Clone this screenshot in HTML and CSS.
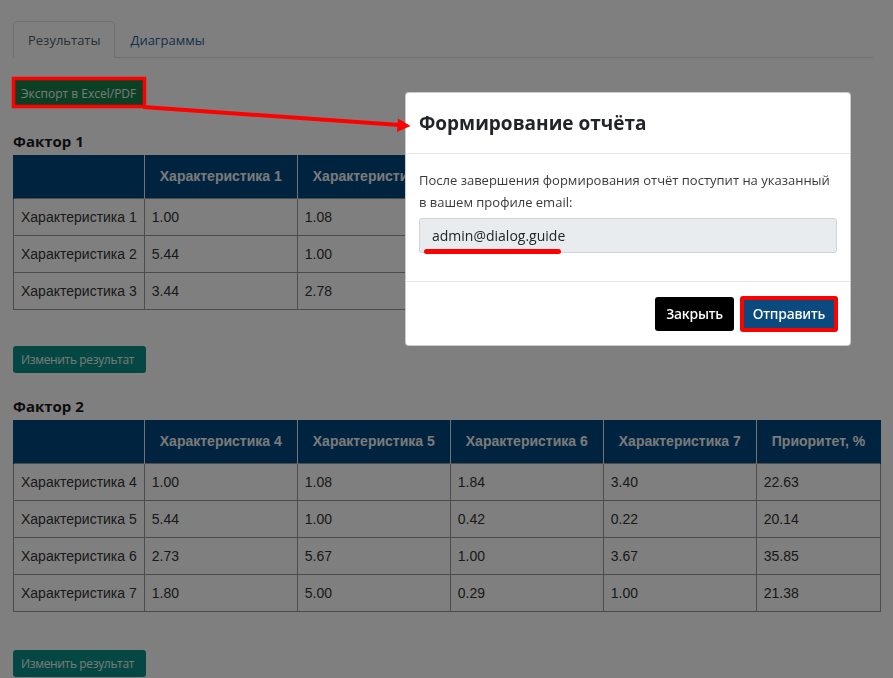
FILE: index.html
```html
<!DOCTYPE html>
<html lang="ru">
<head>
<meta charset="utf-8">
<title>Результаты</title>
<link rel="stylesheet" href="styles.css">
</head>
<body>
<div class="page">
  <ul class="tabs">
    <li class="tab tab-active">Результаты</li>
    <li class="tab">Диаграммы</li>
  </ul>

  <button class="btn btn-export">Экспорт в Excel/PDF</button>

  <h3 class="factor-title">Фактор 1</h3>
  <table class="matrix">
    <thead>
      <tr><th></th><th>Характеристика 1</th><th>Характеристика 2</th><th>Характеристика 3</th><th>Приоритет, %</th></tr>
    </thead>
    <tbody>
      <tr><td>Характеристика 1</td><td>1.00</td><td>1.08</td><td>1.84</td><td>33.63</td></tr>
      <tr><td>Характеристика 2</td><td>5.44</td><td>1.00</td><td>0.42</td><td>30.14</td></tr>
      <tr><td>Характеристика 3</td><td>3.44</td><td>2.78</td><td>1.00</td><td>36.23</td></tr>
    </tbody>
  </table>
  <button class="btn btn-edit">Изменить результат</button>

  <h3 class="factor-title">Фактор 2</h3>
  <table class="matrix">
    <thead>
      <tr><th></th><th>Характеристика 4</th><th>Характеристика 5</th><th>Характеристика 6</th><th>Характеристика 7</th><th>Приоритет, %</th></tr>
    </thead>
    <tbody>
      <tr><td>Характеристика 4</td><td>1.00</td><td>1.08</td><td>1.84</td><td>3.40</td><td>22.63</td></tr>
      <tr><td>Характеристика 5</td><td>5.44</td><td>1.00</td><td>0.42</td><td>0.22</td><td>20.14</td></tr>
      <tr><td>Характеристика 6</td><td>2.73</td><td>5.67</td><td>1.00</td><td>3.67</td><td>35.85</td></tr>
      <tr><td>Характеристика 7</td><td>1.80</td><td>5.00</td><td>0.29</td><td>1.00</td><td>21.38</td></tr>
    </tbody>
  </table>
  <button class="btn btn-edit btn-edit-last">Изменить результат</button>
</div>

<div class="backdrop"></div>

<div class="modal">
  <div class="modal-header">
    <h2 class="modal-title">Формирование отчёта</h2>
  </div>
  <div class="modal-body">
    <p class="modal-text">После завершения формирования отчёт поступит на указанный в вашем профиле email:</p>
    <div class="email-field">admin@dialog.guide</div>
  </div>
  <div class="modal-footer">
    <button class="mbtn mbtn-close">Закрыть</button>
    <button class="mbtn mbtn-send">Отправить</button>
  </div>
</div>

<svg class="annotations" width="893" height="678" viewBox="0 0 893 678">
  <rect x="13.5" y="78.5" width="131" height="28" fill="none" stroke="#ff0000" stroke-width="3.5"/>
  <line x1="143" y1="107" x2="400" y2="125" stroke="#ff0000" stroke-width="4"/>
  <polygon points="398,118.5 410.5,126 397,132" fill="#ff0000"/>
</svg>
</body>
</html>
```

FILE: styles.css
```css
* { box-sizing: border-box; }

html, body {
  margin: 0;
  padding: 0;
  background: #ffffff;
}

body {
  font-family: "Open Sans", "Noto Sans", sans-serif;
  color: #212529;
  width: 893px;
  height: 678px;
  overflow: hidden;
}

.page {
  padding: 21px 20px 0 13px;
}

/* Tabs */
.tabs {
  list-style: none;
  margin: 0;
  padding: 0;
  display: flex;
  border-bottom: 1px solid #dee2e6;
}

.tab {
  height: 37px;
  padding: 0 14px;
  display: flex;
  align-items: center;
  font-size: 13px;
  color: #2b5d92;
  border: 1px solid transparent;
  border-radius: 4px 4px 0 0;
  margin-bottom: -1px;
}

.tab-active {
  color: #4d5e70;
  background: #ffffff;
  border-color: #dee2e6 #dee2e6 #ffffff;
}

/* Buttons on page */
.btn {
  display: block;
  border: none;
  font-family: "Open Sans", "Noto Sans", sans-serif;
  font-size: 12px;
  color: #eef3f0;
  padding: 0 8px;
  border-radius: 3px;
  white-space: nowrap;
  text-align: left;
}

.btn-export {
  margin-top: 20px;
  width: 133px;
  height: 30px;
  background: #17804a;
  border-radius: 0;
}

.btn-edit {
  margin-top: 36px;
  width: 133px;
  height: 27px;
  background: #0b8f87;
  letter-spacing: -0.35px;
}

.btn-edit-last {
  margin-top: 38px;
}

.factor-title {
  margin: 23px 0 4px;
  font-size: 15px;
  line-height: 20px;
  font-weight: 700;
  color: #1a1a1a;
}

/* Tables */
.matrix {
  border-collapse: collapse;
  font-family: "Liberation Sans", Arial, sans-serif;
  font-size: 14px;
  color: #333333;
}

.matrix th {
  background: #00487f;
  color: #f4f4f4;
  font-weight: 700;
  font-size: 14px;
  line-height: 20px;
  padding: 11px 15px 12px;
  border-left: 1px solid #e6e6e6;
  border-right: 1px solid #e6e6e6;
  white-space: nowrap;
}

.matrix th:first-child { border-left: 1px solid #00487f; }
.matrix th:last-child { border-right: 1px solid #00487f; }

.matrix td {
  border: 1px solid #999999;
  padding: 8px 7px;
  line-height: 20px;
  white-space: nowrap;
}

/* Backdrop */
.backdrop {
  position: fixed;
  inset: 0;
  background: rgba(0, 0, 0, 0.5);
}

/* Modal */
.modal {
  position: fixed;
  left: 405px;
  top: 92px;
  width: 446px;
  background: #ffffff;
  border: 1px solid rgba(0, 0, 0, 0.2);
  border-radius: 4px;
  font-family: "Open Sans", "Noto Sans", sans-serif;
}

.modal-header {
  height: 61px;
  padding: 0 13px;
  display: flex;
  align-items: center;
  border-bottom: 1px solid #e3e6e9;
}

.modal-title {
  margin: 0;
  font-size: 19px;
  font-weight: 700;
  color: #212529;
}

.modal-body {
  padding: 15px 13px 28px;
}

.modal-text {
  margin: 0 0 5px;
  font-size: 13px;
  line-height: 22px;
  color: #3a3a3a;
}

.email-field {
  position: relative;
  height: 35px;
  padding: 0 12px;
  display: flex;
  align-items: center;
  font-size: 14px;
  color: #212529;
  background: #e9ecef;
  border: 1px solid #ced4da;
  border-radius: 3px;
}

.email-field::after {
  content: "";
  position: absolute;
  left: 4px;
  top: 30px;
  width: 137px;
  height: 5px;
  border-radius: 3px;
  background: #ff0000;
}

.modal-footer {
  height: 64px;
  padding: 0 13px 0 0;
  display: flex;
  align-items: center;
  justify-content: flex-end;
  gap: 7px;
  border-top: 1px solid #e3e6e9;
}

.mbtn {
  height: 34px;
  border: none;
  border-radius: 3px;
  font-family: "Noto Sans", "Open Sans", sans-serif;
  font-size: 14px;
  font-weight: 500;
  color: #ffffff;
  padding: 0;
  letter-spacing: -0.2px;
}

.mbtn-close {
  width: 79px;
  background: #000000;
}

.mbtn-send {
  width: 96px;
  background: #0b4a7e;
  border-radius: 2px;
  box-shadow: 0 0 0 1px #ff0000, inset 0 0 0 3px #ff0000;
}

/* Annotations drawn over the screenshot */
.annotations {
  position: fixed;
  left: 0;
  top: 0;
  pointer-events: none;
}
```
